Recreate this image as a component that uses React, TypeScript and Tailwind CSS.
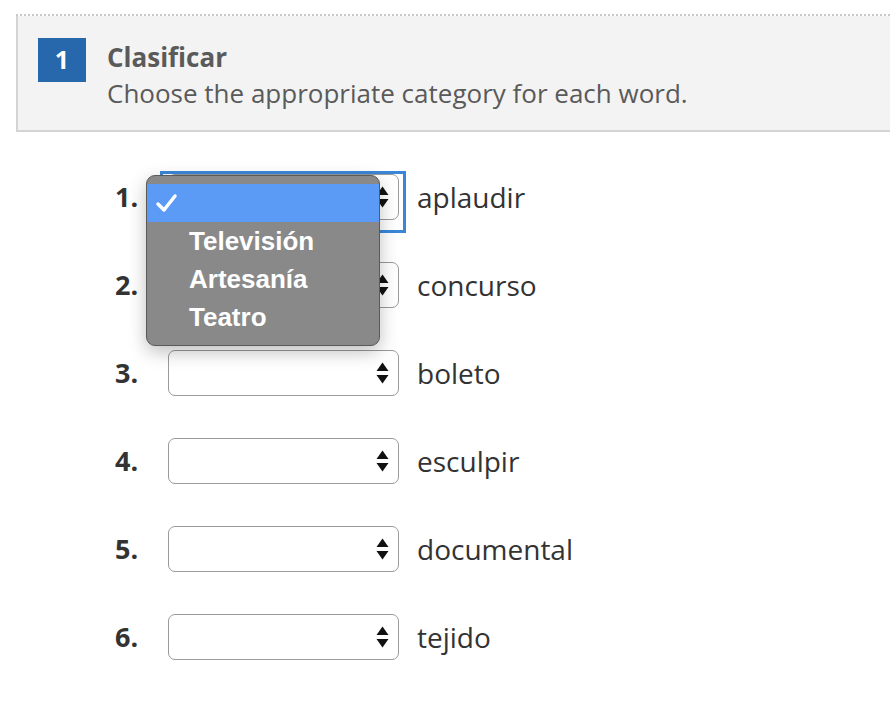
import React from "react";

const rows = [
  { n: 1, word: "aplaudir" },
  { n: 2, word: "concurso" },
  { n: 3, word: "boleto" },
  { n: 4, word: "esculpir" },
  { n: 5, word: "documental" },
  { n: 6, word: "tejido" },
];

const options = ["Televisión", "Artesanía", "Teatro"];

function Arrows() {
  return (
    <svg width="13" height="24" viewBox="0 0 13 24" className="shrink-0">
      <path d="M6.5 1.5 L12.5 10 L0.5 10 Z" fill="#111" />
      <path d="M6.5 22.5 L12.5 14 L0.5 14 Z" fill="#111" />
    </svg>
  );
}

function FakeSelect({ focused }: { focused?: boolean }) {
  return (
    <div className="relative">
      {focused && (
        <div className="absolute left-[-8px] top-[-3px] h-[62px] w-[246px] border-[3px] border-[#3a87d8]" />
      )}
      <div className="relative flex h-[46px] w-[231px] items-center justify-end rounded-[7px] border border-[#9a9a9a] bg-white pr-[9px]">
        <Arrows />
      </div>
    </div>
  );
}

function Menu() {
  return (
    <div
      className="absolute left-[146px] top-[175px] w-[234px] rounded-[9px] border border-[#5a5a5a] bg-[#898989] pt-[8px] pb-[9px] shadow-[0_6px_18px_rgba(0,0,0,0.25)]"
      style={{ fontFamily: '"Liberation Sans", Arial, sans-serif' }}
    >
      <div className="flex h-[38px] items-center bg-[#5b9af5] pl-[8px]">
        <svg width="24" height="22" viewBox="0 0 24 22">
          <path d="M3 12 L9 18 L20 4" fill="none" stroke="#fff" strokeWidth="3.5" strokeLinecap="round" strokeLinejoin="round" />
        </svg>
      </div>
      {options.map((o) => (
        <div key={o} className="flex h-[38px] items-center pl-[42px] text-[26px] font-bold text-white">
          {o}
        </div>
      ))}
    </div>
  );
}

export default function App() {
  return (
    <div
      className="relative min-h-[722px] w-[890px] overflow-hidden bg-white"
      style={{ fontFamily: '"Open Sans", sans-serif' }}
    >
      <div className="ml-[16px] mt-[14px] border-t-2 border-dotted border-[#c8c8c8]">
        <div className="flex h-[116px] w-[900px] items-start border-b-2 border-l-2 border-[#d4d4d4] bg-[#f3f3f3] pl-[20px] pt-[22px]">
          <div className="flex h-[44px] w-[48px] items-center justify-center bg-[#2767ac] text-[25px] font-bold text-white">
            1
          </div>
          <div className="ml-[21px] mt-[1px] text-[#5a5a5a]">
            <div className="text-[26px] font-bold leading-[36px]">Clasificar</div>
            <div className="text-[26px] leading-[36px]">Choose the appropriate category for each word.</div>
          </div>
        </div>
      </div>

      <div className="ml-[115px] mt-[42px] flex flex-col gap-[42px]">
        {rows.map((r) => (
          <div key={r.n} className="flex h-[46px] items-center">
            <div className="w-[53px] text-[27px] font-bold text-[#333]">{r.n}.</div>
            <FakeSelect focused={r.n === 1} />
            <div className="ml-[18px] text-[28px] text-[#333]">{r.word}</div>
          </div>
        ))}
      </div>

      <Menu />
    </div>
  );
}
